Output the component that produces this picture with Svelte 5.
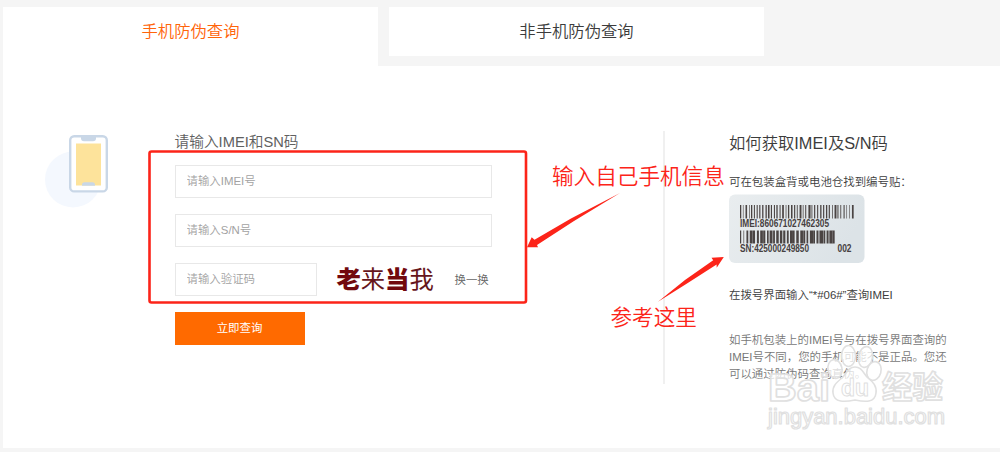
<script>
  const tabs = ["手机防伪查询", "非手机防伪查询"];
  let active = $state(0);
  let imei = $state("");
  let sn = $state("");
  let code = $state("");

  // alternating bar / gap widths, one hex digit each
  const topCode = "6d4dbc3a9a7b5c8b9d6ab88c5b9c7a8f5a9b7d8a6c9c5b7eaa6b8c5f9a8b6c8e5b9a7c6f5e4d4f8c";
  const bottomCode = "5f4db8c6dac7b6d9a5c8b7f6a9d8b7c5a9f8b6c7a9d6b8c5f8b7c4d5d7";

  function bars(pattern, width) {
    const list = [];
    const units = [...pattern].map((c) => parseInt(c, 16));
    const total = units.reduce((a, b) => a + b, 0);
    let x = 0;
    units.forEach((u, i) => {
      const w = (u / total) * width;
      if (i % 2 === 0) list.push({ x: 11 + x, w: w * (i % 6 ? 0.95 : 1.4) });
      x += w;
    });
    return list;
  }
  const topBars = bars(topCode, 115);
  const bottomBars = bars(bottomCode, 96);
</script>

<div class="page">
  <nav class="tabs">
    {#each tabs as tab, i (tab)}
      <button class="tab" class:active={active === i} onclick={() => (active = i)}>{tab}</button>
    {/each}
  </nav>

  <main class="panel">
    <svg class="phone" width="70" height="80" viewBox="0 0 70 80" aria-hidden="true">
      <circle cx="28" cy="48.5" r="28" fill="#f4f8fe" />
      <rect x="25.2" y="5.2" width="36.6" height="55.2" rx="4" fill="#fff" stroke="#c9d7e7" stroke-width="2.4" />
      <rect x="31" y="12.5" width="25" height="42" fill="#fde39b" />
      <path d="M36 5h15v2.2q0 3-3 3h-9q-3 0-3-3z" fill="#c9d7e7" />
      <path d="M37 54.7v-.7q0-2.7 2.5-2.7h8q2.5 0 2.5 2.7v.7z" fill="#c9d7e7" />
    </svg>

    <form class="query" onsubmit={(e) => e.preventDefault()}>
      <h2>请输入IMEI和SN码</h2>
      <input bind:value={imei} placeholder="请输入IMEI号" />
      <input bind:value={sn} placeholder="请输入S/N号" />
      <div class="verify">
        <input bind:value={code} placeholder="请输入验证码" />
        <span class="captcha"><b>老</b>来<b>当</b>我</span>
        <span class="swap">换一换</span>
      </div>
      <button class="submit">立即查询</button>
    </form>

    <aside class="help">
      <h2>如何获取IMEI及S/N码</h2>
      <p class="step">可在包装盒背或电池仓找到编号贴：</p>
      <svg class="label" width="136" height="70" viewBox="0 0 136 70" role="img" aria-label="编号贴">
        <defs>
          <linearGradient id="paper" x2="1" y2="0.3">
            <stop offset="0" stop-color="#e9edef" />
            <stop offset="1" stop-color="#dce3e7" />
          </linearGradient>
        </defs>
        <rect x="0" y="0.5" width="135.5" height="68.5" rx="6" fill="url(#paper)" />
        {#each topBars as b, i (i)}
          <rect x={b.x} y="11" width={b.w} height="13.5" fill="#4a4443" />
        {/each}
        {#each bottomBars as b, i (i)}
          <rect x={b.x} y="36.5" width={b.w} height="13" fill="#4a4443" />
        {/each}
        <g class="serial">
          <text x="11" y="33.2" textLength="89" lengthAdjust="spacingAndGlyphs">IMEI:860671027462305</text>
          <text x="11" y="58.2" textLength="69" lengthAdjust="spacingAndGlyphs">SN:425000249850</text>
          <text x="108.5" y="58.2" textLength="14" lengthAdjust="spacingAndGlyphs">002</text>
        </g>
      </svg>
      <p class="step dial">在拨号界面输入“*#06#”查询IMEI</p>
      <p class="note">
        如手机包装上的IMEI号与在拨号界面查询的<br />IMEI号不同，您的手机可能不是正品。您还<br />可以通过防伪码查询真伪。
      </p>
    </aside>
  </main>

  <svg class="marks" width="1000" height="452" viewBox="0 0 1000 452">
    <g class="water">
      <text x="768" y="400.5" font-size="39" textLength="62" lengthAdjust="spacingAndGlyphs">Bai</text>
      <ellipse cx="835" cy="369" rx="7" ry="9.5" transform="rotate(-12 835 369)" />
      <ellipse cx="848.5" cy="356" rx="7" ry="10.5" />
      <ellipse cx="865.5" cy="357" rx="7" ry="10.5" transform="rotate(10 865.5 357)" />
      <ellipse cx="874" cy="371" rx="7" ry="9.5" transform="rotate(16 874 371)" />
      <path d="M855 367c7 0 8 6 13 11 5 4 9 8 8 15-1 10-11 9-21 7-10 2-21 3-22-7-1-7 4-11 9-15 5-5 6-11 13-11z" />
      <text class="du" x="841" y="396" font-size="24" textLength="28" lengthAdjust="spacingAndGlyphs">du</text>
      <text class="cjk" x="882" y="398" font-size="30.5" textLength="61">经验</text>
      <text class="url" x="768" y="423.5" font-size="22" textLength="177" lengthAdjust="spacingAndGlyphs">jingyan.baidu.com</text>
    </g>
    <rect x="149.5" y="151.5" width="376.5" height="151" rx="2" fill="none" stroke="#fc2419" stroke-width="2.6" />
    <g class="red">
      <path d="M620 193 L571 218.5 L534.5 239.7 L531.7 237.2 L527 247.3 L538 247.3 L537 245 L574 221 Z" />
      <path d="M658 301.8 L685 280 L713.2 260.2 L711.5 257.8 L723.8 257 L716.7 267.8 L716.6 264.6 L687 283.5 Z" />
      <text x="552" y="184">输入自己手机信息</text>
      <text x="610.5" y="324.5">参考这里</text>
    </g>
  </svg>
</div>

<style>
  :global(body) {
    margin: 0;
    background: #f5f5f5;
  }
  .page {
    position: relative;
    box-sizing: border-box;
    height: 452px;
    padding: 7px 0 4px 3px;
    overflow: hidden;
    display: flex;
    flex-direction: column;
    background: #f5f5f5;
    font-family: "Liberation Sans", "Noto Sans CJK SC", sans-serif;
    font-weight: 350;
    color: #444;
  }
  .tabs {
    display: flex;
    gap: 11px;
    align-items: flex-start;
    height: 59px;
  }
  .tab {
    width: 375px;
    height: 49px;
    padding: 0;
    border: 0;
    background: #fff;
    color: #3c3c3c;
    font: 350 16.34px/49px "Liberation Sans", "Noto Sans CJK SC", sans-serif;
  }
  .tab.active {
    height: 59px;
    padding-bottom: 10px;
    color: #ff640a;
  }
  .panel {
    flex: 1;
    display: flex;
    align-items: flex-start;
    background: #fff;
  }
  .phone {
    flex: none;
    margin: 65px 0 0 42px;
    width: 70px;
  }
  .query {
    width: 317px;
    margin: 65px 0 0 59.5px;
    display: flex;
    flex-direction: column;
    align-items: flex-start;
  }
  h2 {
    margin: 0;
    font-weight: 350;
    white-space: nowrap;
  }
  .query h2 {
    height: 34px;
    font-size: 14.7px;
    line-height: 22.5px;
    color: #606060;
  }
  input {
    box-sizing: border-box;
    width: 317px;
    height: 33px;
    margin: 0 0 16px;
    padding: 0 11px 2px;
    border: 1px solid #e8e8e8;
    outline: none;
    font: 350 11.43px "Liberation Sans", "Noto Sans CJK SC", sans-serif;
    color: #444;
  }
  input::placeholder {
    color: #a2a2a2;
    opacity: 1;
  }
  .verify {
    display: flex;
    align-items: center;
    height: 33px;
    margin-bottom: 16px;
  }
  .verify input {
    width: 142px;
    margin: 0;
  }
  .captcha {
    width: 118px;
    margin-left: 20px;
    font-size: 24.3px;
    font-weight: 400;
    line-height: 33px;
    color: #66161c;
    white-space: nowrap;
  }
  .captcha b {
    font-weight: 900;
    color: #72080e;
  }
  .swap {
    padding-bottom: 2px;
    font-size: 11.43px;
    color: #666;
    white-space: nowrap;
  }
  .submit {
    width: 130px;
    height: 33px;
    padding: 0;
    border: 0;
    background: #ff6a00;
    color: #fff;
    font: 400 11.43px/33px "Liberation Sans", "Noto Sans CJK SC", sans-serif;
  }
  .help {
    box-sizing: border-box;
    width: 300px;
    height: 253px;
    margin: 65px 0 0 171px;
    padding-left: 64.5px;
    border-left: 2px solid #f0f0f0;
  }
  .help h2 {
    height: 40px;
    font-size: 16.34px;
    line-height: 25px;
    color: #3c3c3c;
  }
  p {
    margin: 0;
    font-size: 11.43px;
    line-height: 17px;
    white-space: nowrap;
  }
  .step {
    height: 23px;
    line-height: 22px;
    color: #3c3c3c;
  }
  .label {
    display: block;
  }
  .serial {
    font: bold 10px "Liberation Sans Narrow", "Liberation Sans", sans-serif;
    fill: #454040;
  }
  .dial {
    height: 68px;
    padding-top: 20px;
    box-sizing: border-box;
  }
  .note {
    color: #777;
  }
  .marks {
    position: absolute;
    left: 0;
    top: 0;
    pointer-events: none;
  }
  .red {
    fill: #fc2419;
    font: 350 21.6px "Noto Sans CJK SC", sans-serif;
  }
  .water {
    fill: rgba(255, 255, 255, 0.75);
    stroke: #e0e0e0;
    stroke-width: 1.6;
    stroke-linejoin: round;
    font-family: "Liberation Sans", sans-serif;
    font-weight: bold;
  }
  .water .du {
    stroke-width: 1;
  }
  .water .cjk {
    font-family: "Noto Sans CJK SC", sans-serif;
  }
  .water .url {
    font-weight: 400;
    stroke-width: 1.2;
  }
</style>
